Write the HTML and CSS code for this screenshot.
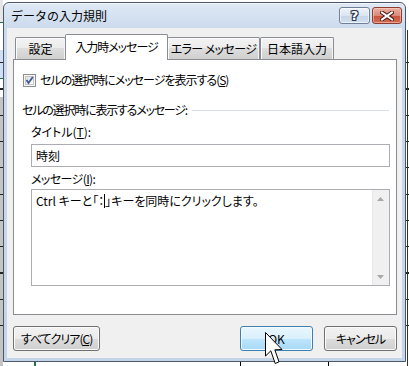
FILE: index.html
```html
<!DOCTYPE html>
<html lang="ja">
<head>
<meta charset="utf-8">
<title>データの入力規則</title>
<link rel="stylesheet" href="styles.css">
</head>
<body>
<div class="desk">
  <div class="window">
    <div class="titlebar">
      <span class="title">データの入力規則</span>
      <span class="tbtn help">?</span>
      <span class="tbtn close">
        <svg width="14" height="10" viewBox="0 0 14 10">
          <path d="M2 1.5 L12 8.5 M12 1.5 L2 8.5" stroke="#4a1d16" stroke-width="4" stroke-linecap="square" fill="none"/>
          <path d="M2 1.5 L12 8.5 M12 1.5 L2 8.5" stroke="#ffffff" stroke-width="2" stroke-linecap="square" fill="none"/>
        </svg>
      </span>
    </div>
    <div class="client">
      <div class="tabs">
        <div class="tab t1">設定</div>
        <div class="tab active"><span class="tight">入力時メッセージ</span></div>
        <div class="tab t3"><span class="semi">エラー メッセージ</span></div>
        <div class="tab t4">日本語入力</div>
      </div>
      <div class="panel">
        <div class="check-row">
          <svg class="checkbox" width="13" height="13" viewBox="0 0 13 13">
            <defs>
              <linearGradient id="cbg" x1="0" y1="0" x2="1" y2="1">
                <stop offset="0" stop-color="#dcdcdc"/>
                <stop offset="1" stop-color="#ffffff"/>
              </linearGradient>
            </defs>
            <rect x="0.5" y="0.5" width="12" height="12" fill="#f6f6f6" stroke="#8e8f8f"/>
            <rect x="2.5" y="2.5" width="8" height="8" fill="url(#cbg)" stroke="#c6c6c6"/>
            <path d="M3.5 6 L5.5 9 L9.8 3" stroke="#3c5a9a" stroke-width="1.8" fill="none"/>
          </svg>
          <span class="label tight">セルの選択時にメッセージを表示する(<u>S</u>)</span>
        </div>
        <div class="group">
          <span class="label tighter">セルの選択時に表示するメッセージ:</span>
          <span class="rule"></span>
        </div>
        <div class="field-label">タイトル(<u>T</u>):</div>
        <div class="input">時刻</div>
        <div class="field-label second"><span class="semi">メッセージ(<u>I</u>):</span></div>
        <div class="textarea">
          <div class="text">Ctrl キーと「：<span class="caret"></span>」キーを同時にクリックします。</div>
          <div class="scroll">
            <div class="arrow">
              <svg width="7" height="4" viewBox="0 0 7 4"><path d="M0 4 L3.5 0 L7 4 Z" fill="#a8a8a8"/></svg>
            </div>
            <div class="track"></div>
            <div class="arrow">
              <svg width="7" height="4" viewBox="0 0 7 4"><path d="M0 0 L3.5 4 L7 0 Z" fill="#a8a8a8"/></svg>
            </div>
          </div>
        </div>
      </div>
      <div class="buttons">
        <div class="btn clear"><span class="tight">すべてクリア(<u>C</u>)</span></div>
        <div class="spacer"></div>
        <div class="btn ok">OK</div>
        <div class="btn cancel"><span class="tight">キャンセル</span></div>
      </div>
    </div>
  </div>
  <svg class="pointer" width="19" height="34" viewBox="0 0 19 34">
    <path d="M0.5 0.5 L0.5 24 L5.8 18.8 L10.2 31.5 L14 29.8 L9.8 17.8 L17 17.5 Z" fill="#ffffff" stroke="#000000" stroke-width="1" stroke-linejoin="miter"/>
  </svg>
</div>
</body>
</html>
```

FILE: styles.css
```css
* {
  box-sizing: border-box;
}

html,
body {
  margin: 0;
  padding: 0;
}

body {
  font-family: "Noto Sans CJK JP", "Noto Sans", sans-serif;
  font-size: 12px;
  line-height: 16px;
  color: #000;
  font-feature-settings: "palt" 1;
}

u {
  text-decoration: underline;
  text-underline-offset: 1px;
}

.tight {
  letter-spacing: -1px;
}

.tighter {
  letter-spacing: -1.2px;
}

.semi {
  letter-spacing: -0.6px;
}

.desk {
  position: relative;
  width: 409px;
  height: 366px;
  overflow: hidden;
  background-color: #ffffff;
  background-image:
    linear-gradient(#217346, #217346),
    linear-gradient(#000, #000),
    linear-gradient(#000, #000),
    linear-gradient(#333, #333),
    repeating-linear-gradient(to bottom, transparent 0, transparent 25px, #222 25px, #222 26.3px),
    linear-gradient(#217346, #217346),
    linear-gradient(#217346, #217346),
    linear-gradient(#cde0f5, #cde0f5),
    linear-gradient(#c4c4c4, #c4c4c4),
    linear-gradient(#e6e6e6, #e6e6e6);
  background-size:
    2px 4px,
    1px 4px,
    1px 4px,
    1px 336px,
    409px 300px,
    3px 1px,
    3px 1px,
    3px 28px,
    3px 269px,
    3px 22px;
  background-position:
    34px 362px,
    240px 362px,
    328px 362px,
    407px 30px,
    0 37px,
    0 22px,
    0 78px,
    0 50px,
    0 97px,
    0 0;
  background-repeat: no-repeat;
}

/* window */
.window {
  position: absolute;
  left: 3px;
  top: 2px;
  width: 403px;
  height: 360px;
  border: 1px solid #4b5869;
  border-radius: 6px 6px 0 0;
  background: linear-gradient(#dfe9f5, #cbdaec 26px, #c5d5e9);
  display: flex;
  flex-direction: column;
  box-shadow: inset 0 1px 0 #f2f6fb;
}

.titlebar {
  height: 25px;
  flex: none;
  display: flex;
  align-items: flex-start;
  padding-left: 7px;
  padding-right: 3px;
}

.title {
  flex: 1;
  margin-top: 5px;
  font-size: 12px;
  line-height: 16px;
  font-feature-settings: normal;
  color: #000;
}

.tbtn {
  margin-top: 4px;
  height: 17px;
  border-radius: 3px;
  display: flex;
  align-items: center;
  justify-content: center;
}

.help {
  width: 31px;
  border: 1px solid #6e7f97;
  background: linear-gradient(#eef3f9, #dbe5f1 50%, #c7d5e7 51%, #d3dfee);
  box-shadow: inset 0 0 0 1px rgba(255, 255, 255, 0.6);
  font-family: "DejaVu Sans", sans-serif;
  font-weight: bold;
  font-size: 13px;
  line-height: 15px;
  color: #fff;
  text-shadow:
    1px 0 0 #2c3b52, -1px 0 0 #2c3b52, 0 1px 0 #2c3b52, 0 -1px 0 #2c3b52,
    1px 1px 0 #2c3b52, -1px -1px 0 #2c3b52, 1px -1px 0 #2c3b52, -1px 1px 0 #2c3b52;
}

.close {
  width: 30px;
  margin-left: 2px;
  border: 1px solid #8b3b2f;
  background: linear-gradient(#eab0a2, #d98a78 50%, #c8533e 51%, #d46b52);
  box-shadow: inset 0 0 0 1px rgba(255, 220, 210, 0.5);
}

.client {
  flex: 1;
  margin: 0 3px 3px 3px;
  background: #f0f0f0;
  display: flex;
  flex-direction: column;
}

/* tabs */
.tabs {
  position: relative;
  z-index: 2;
  display: flex;
  align-items: flex-start;
  margin-top: 6px;
  padding-left: 8px;
  height: 26px;
}

.tab {
  height: 22px;
  margin-top: 3px;
  border: 1px solid #898c95;
  border-bottom: none;
  border-radius: 2px 2px 0 0;
  background: linear-gradient(#f3f3f3, #ebebeb 50%, #dddddd 50%, #cfcfcf);
  box-shadow: inset 1px 1px 0 #fcfcfc, inset -1px 0 0 #f4f4f4;
  display: flex;
  align-items: center;
  justify-content: center;
  white-space: nowrap;
}

.t1 {
  width: 51px;
}

.active {
  width: 103px;
  height: 26px;
  margin-top: 0;
  margin-left: -1px;
  background: #fff;
  box-shadow: none;
  padding-bottom: 2px;
  position: relative;
  z-index: 3;
}

.t3 {
  width: 93px;
  margin-left: -1px;
}

.t4 {
  width: 74px;
}

/* panel */
.panel {
  position: relative;
  z-index: 1;
  margin: -1px 5px 0 6px;
  height: 256px;
  flex: none;
  border: 1px solid #898c95;
  background: #fff;
  padding-top: 12px;
  display: flex;
  flex-direction: column;
}

.check-row {
  display: flex;
  align-items: center;
  height: 16px;
  padding-left: 9px;
  gap: 4px;
}

.checkbox {
  flex: none;
}

.group {
  display: flex;
  align-items: center;
  height: 16px;
  margin-top: 14px;
  padding-left: 8px;
  padding-right: 7px;
}

.rule {
  flex: 1;
  height: 1px;
  margin-left: 5px;
  background: #d5dfe5;
}

.field-label {
  height: 16px;
  margin-top: 6px;
  padding-left: 17px;
}

.field-label.second {
  margin-top: 4px;
}

.input {
  height: 23px;
  margin: 4px 6px 0 17px;
  border: 1px solid #abadb3;
  background: #fff;
  padding-left: 4px;
  line-height: 21px;
}

.textarea {
  height: 97px;
  margin: 2px 6px 0 17px;
  border: 1px solid #abadb3;
  background: #fff;
  display: flex;
}

.text {
  flex: 1;
  padding: 3px 4px;
  white-space: nowrap;
}

.caret {
  display: inline-block;
  width: 1px;
  height: 14px;
  background: #000;
  vertical-align: -2px;
}

.scroll {
  width: 17px;
  flex: none;
  background: #f0f0f0;
  box-shadow: inset 1px 0 0 #e8e8e8;
  display: flex;
  flex-direction: column;
}

.arrow {
  height: 17px;
  display: flex;
  align-items: center;
  justify-content: center;
}

.track {
  flex: 1;
}

/* buttons */
.buttons {
  display: flex;
  height: 25px;
  margin-top: 11px;
  padding: 0 5px 0 6px;
}

.spacer {
  flex: 1;
}

.btn {
  height: 25px;
  border: 1px solid #707070;
  border-radius: 3px;
  background: linear-gradient(#f2f2f2, #ebebeb 50%, #dddddd 50%, #cfcfcf);
  box-shadow: inset 0 0 0 1px #fbfbfb;
  display: flex;
  align-items: center;
  justify-content: center;
  white-space: nowrap;
}

.clear {
  width: 87px;
}

.ok {
  width: 73px;
  border-color: #3c7fb1;
  background: linear-gradient(#eaf6fd, #d9f0fc 50%, #bee6fd 50%, #a7d9f5);
  box-shadow: inset 0 0 0 1px #f4fbff;
}

.cancel {
  width: 73px;
  margin-left: 11px;
}

.pointer {
  position: absolute;
  left: 265px;
  top: 332px;
}
```
